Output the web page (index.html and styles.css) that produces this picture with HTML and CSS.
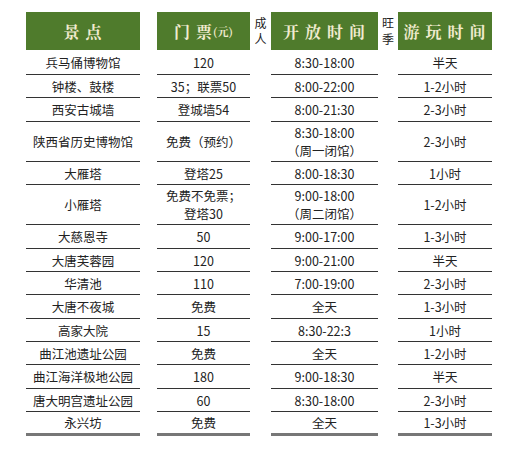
FILE: index.html
```html
<!DOCTYPE html>
<html lang="zh">
<head>
<meta charset="utf-8">
<link rel="stylesheet" href="styles.css">
</head>
<body>
<div class="sheet">
  <div class="hd">景 点</div>
  <div></div>
  <div class="hd">门 票<span class="yuan">(元)</span></div>
  <div class="note">成<br>人</div>
  <div class="hd">开 放 时 间</div>
  <div class="note">旺<br>季</div>
  <div class="hd">游 玩 时 间</div>

  <div class="c">兵马俑博物馆</div><div></div><div class="c">120</div><div></div><div class="c">8:30-18:00</div><div></div><div class="c">半天</div>
  <div class="c">钟楼、鼓楼</div><div></div><div class="c">35；联票50</div><div></div><div class="c">8:00-22:00</div><div></div><div class="c">1-2小时</div>
  <div class="c">西安古城墙</div><div></div><div class="c">登城墙54</div><div></div><div class="c">8:00-21:30</div><div></div><div class="c">2-3小时</div>
  <div class="c">陕西省历史博物馆</div><div></div><div class="c">免费（预约）</div><div></div><div class="c">8:30-18:00<br>（周一闭馆）</div><div></div><div class="c">2-3小时</div>
  <div class="c">大雁塔</div><div></div><div class="c">登塔25</div><div></div><div class="c">8:00-18:30</div><div></div><div class="c">1小时</div>
  <div class="c">小雁塔</div><div></div><div class="c">免费不免票；<br>登塔30</div><div></div><div class="c">9:00-18:00<br>（周二闭馆）</div><div></div><div class="c">1-2小时</div>
  <div class="c">大慈恩寺</div><div></div><div class="c">50</div><div></div><div class="c">9:00-17:00</div><div></div><div class="c">1-3小时</div>
  <div class="c">大唐芙蓉园</div><div></div><div class="c">120</div><div></div><div class="c">9:00-21:00</div><div></div><div class="c">半天</div>
  <div class="c">华清池</div><div></div><div class="c">110</div><div></div><div class="c">7:00-19:00</div><div></div><div class="c">2-3小时</div>
  <div class="c">大唐不夜城</div><div></div><div class="c">免费</div><div></div><div class="c">全天</div><div></div><div class="c">1-3小时</div>
  <div class="c">高家大院</div><div></div><div class="c">15</div><div></div><div class="c">8:30-22:3</div><div></div><div class="c">1小时</div>
  <div class="c">曲江池遗址公园</div><div></div><div class="c">免费</div><div></div><div class="c">全天</div><div></div><div class="c">1-2小时</div>
  <div class="c">曲江海洋极地公园</div><div></div><div class="c">180</div><div></div><div class="c">9:00-18:30</div><div></div><div class="c">半天</div>
  <div class="c">唐大明宫遗址公园</div><div></div><div class="c">60</div><div></div><div class="c">8:30-18:00</div><div></div><div class="c">2-3小时</div>
  <div class="c last">永兴坊</div><div></div><div class="c last">免费</div><div></div><div class="c last">全天</div><div></div><div class="c last">1-3小时</div>
</div>
</body>
</html>
```

FILE: styles.css
```css
html, body {
  margin: 0;
  padding: 0;
  background: #ffffff;
}
body {
  font-family: "Noto Sans CJK SC", "Noto Sans", sans-serif;
  color: #222;
}
.sheet {
  display: grid;
  grid-template-columns: 114px 17px 93px 21px 107px 20px 94px;
  grid-template-rows: 38px 25px 23px 24px 40px 23px 40px 24px 23px 23px 24px 23px 23px 24px 23px 24px;
  padding: 12px 0 0 26px;
}
.hd {
  background: #4f7b2c;
  color: #f1ebcf;
  font-family: "Noto Serif CJK SC", "Noto Sans CJK SC", serif;
  font-weight: 700;
  font-size: 16px;
  display: flex;
  align-items: center;
  justify-content: center;
  white-space: pre;
  letter-spacing: 1px;
}
.yuan {
  font-size: 11px;
  letter-spacing: 0;
}
.note {
  font-size: 12px;
  line-height: 16px;
  color: #222;
  display: flex;
  align-items: center;
  justify-content: center;
  text-align: center;
}
.c {
  font-size: 12.5px;
  line-height: 18px;
  display: flex;
  align-items: center;
  justify-content: center;
  text-align: center;
  border-bottom: 1.5px solid #333;
  box-sizing: border-box;
  padding-top: 1px;
}
.last {
  border-bottom: 3px solid #777;
}
```
